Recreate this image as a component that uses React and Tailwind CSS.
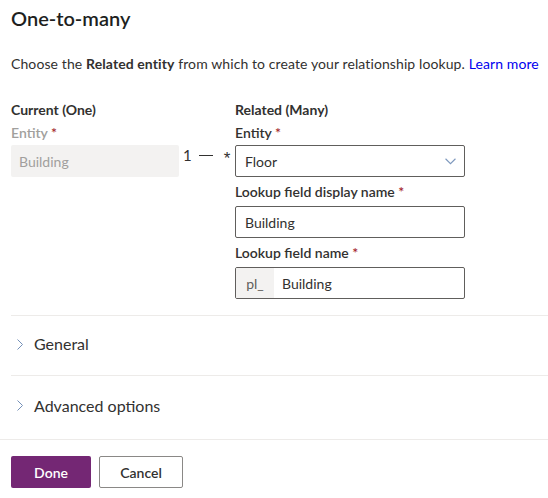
import React from "react";

function Chevron({ className }) {
  return (
    <svg viewBox="0 0 10 6" className={className} fill="none" stroke="currentColor" strokeWidth="1">
      <path d="M0.5 0.5 L5 5 L9.5 0.5" />
    </svg>
  );
}

function ChevronRight({ className }) {
  return (
    <svg viewBox="0 0 6 11" className={className} fill="none" stroke="currentColor" strokeWidth="1">
      <path d="M0.5 0.5 L5.5 5.5 L0.5 10.5" />
    </svg>
  );
}

function Req() {
  return <span className="text-[#a4262c]"> *</span>;
}

export default function App() {
  return (
    <div className="w-[548px] h-[498px] bg-white text-[#323130] font-['Lato','Segoe_UI',sans-serif] text-[14px] overflow-hidden">
      <div className="pl-[11px]">
        <h1 className="text-[20px] font-semibold leading-[28px] pt-[4px] text-[#201f1e]">One-to-many</h1>
        <p className="mt-[22px] leading-[20px] tracking-[0.1px]">
          Choose the <b className="font-bold">Related entity</b> from which to create your relationship lookup.{" "}
          <a className="text-[#0000ee]">Learn more</a>
        </p>

        <div className="flex mt-[26px]">
          <div className="w-[168px]">
            <div className="font-bold leading-[20px]">Current (One)</div>
            <div className="font-semibold leading-[20px] mt-[3px] text-[#a19f9d]">
              Entity<Req />
            </div>
            <div className="mt-[2px] h-[32px] bg-[#f3f2f1] rounded-[2px] flex items-center px-[8px] text-[#a19f9d]">
              Building
            </div>
          </div>

          <div className="w-[56px] pt-[46px] pl-[4px] flex items-start text-[#323130] leading-[18px]">
            <span className="text-[15px]">1</span>
            <span className="mt-[9px] ml-[7px] w-[14px] h-px bg-[#323130]"></span>
            <span className="ml-[11px] mt-[4px] text-[17px] font-['Liberation_Sans',sans-serif]">*</span>
          </div>

          <div className="w-[230px]">
            <div className="font-bold leading-[20px]">Related (Many)</div>
            <div className="font-semibold leading-[20px] mt-[3px]">
              Entity<Req />
            </div>
            <div className="mt-[2px] h-[32px] border border-[#605e5c] rounded-[2px] flex items-center justify-between pl-[9px] pr-[8px]">
              <span>Floor</span>
              <Chevron className="w-[11px] h-[7px] text-[#7d98bd]" />
            </div>

            <div className="font-semibold leading-[20px] mt-[5px]">
              Lookup field display name<Req />
            </div>
            <div className="mt-[4px] h-[32px] border border-[#605e5c] rounded-[2px] flex items-center px-[9px]">
              Building
            </div>

            <div className="font-semibold leading-[20px] mt-[5px]">
              Lookup field name<Req />
            </div>
            <div className="mt-[4px] h-[32px] border border-[#605e5c] rounded-[2px] flex items-stretch overflow-hidden">
              <div className="w-[38px] bg-[#f3f2f1] flex items-center justify-center text-[#605e5c]">pl_</div>
              <div className="flex items-center pl-[8px]">Building</div>
            </div>
          </div>
        </div>

        <div className="mt-[16px] border-t border-[#edebe9]">
          <div className="h-[59px] pb-[3px] flex items-center gap-[11px] pl-[6px] text-[16px]">
            <ChevronRight className="w-[6px] h-[11px] text-[#7490b8]" />
            <span>General</span>
          </div>
        </div>
        <div className="border-t border-[#edebe9]">
          <div className="h-[63px] pb-[4px] flex items-center gap-[11px] pl-[6px] text-[16px]">
            <ChevronRight className="w-[6px] h-[11px] text-[#7490b8]" />
            <span>Advanced options</span>
          </div>
        </div>
      </div>

      <div className="border-t border-[#edebe9] pt-[16px] pl-[11px] flex gap-[8px]">
        <button className="w-[80px] h-[32px] bg-[#742774] text-white font-semibold rounded-[2px]">Done</button>
        <button className="w-[84px] h-[32px] border border-[#8a8886] bg-white text-[#323130] font-semibold rounded-[2px]">Cancel</button>
      </div>
    </div>
  );
}
